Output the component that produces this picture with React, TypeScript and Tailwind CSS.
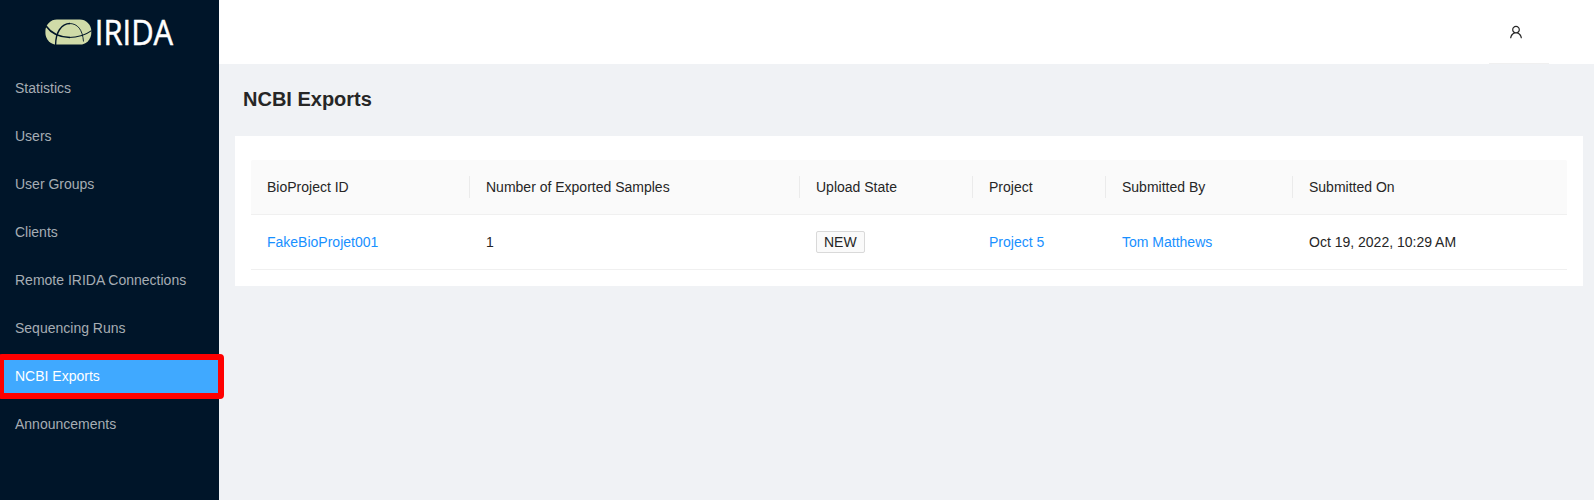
const menu = [
  "Statistics",
  "Users",
  "User Groups",
  "Clients",
  "Remote IRIDA Connections",
  "Sequencing Runs",
  "NCBI Exports",
  "Announcements",
];

const columns = [
  { title: "BioProject ID", width: 219 },
  { title: "Number of Exported Samples", width: 330 },
  { title: "Upload State", width: 173 },
  { title: "Project", width: 133 },
  { title: "Submitted By", width: 187 },
  { title: "Submitted On", width: 274 },
];

function Logo() {
  return (
    <svg width="219" height="64" viewBox="0 0 219 64" className="block">
      <rect x="45.4" y="19.6" width="45.9" height="25" rx="11.5" fill="#d0dba8" />
      <g fill="none" stroke="#001529" strokeLinecap="butt">
        <path d="M46 26C51 33 59 37.3 70 37.5" strokeWidth="1.6" />
        <path d="M69 37.5C79 37.5 86 34.6 91.5 30.6" strokeWidth="1.1" />
        <path d="M55.6 45C55.6 33 61 23.5 70 23.5" strokeWidth="1.4" />
        <path d="M69 23.5C78 23.4 82.5 30 83.5 41.5" strokeWidth="0.9" />
      </g>
      <text
        x="94.8"
        y="44.5"
        fill="#fff"
        stroke="#fff"
        strokeWidth="0.5"
        fontSize="34.6"
        fontWeight="400"
        textLength="78.4"
        lengthAdjust="spacingAndGlyphs"
        className="font-['Open_Sans',sans-serif]"
      >
        IRIDA
      </text>
    </svg>
  );
}

function UserIcon() {
  return (
    <svg viewBox="64 64 896 896" width="14" height="14" fill="currentColor">
      <path d="M858.5 763.6a374 374 0 00-80.6-119.5 375.63 375.63 0 00-119.5-80.6c-.4-.2-.8-.3-1.2-.5C719.5 518 760 444.7 760 362c0-137-111-248-248-248S264 225 264 362c0 82.7 40.5 156 102.8 201.1-.4.2-.8.3-1.2.5-44.8 18.9-85 46-119.5 80.6a375.63 375.63 0 00-80.6 119.5A371.7 371.7 0 00136 901.8a8 8 0 008 8.2h60c4.4 0 7.9-3.5 8-7.8 2-77.2 33-149.5 87.8-204.3 56.7-56.7 132-87.9 212.2-87.9s155.5 31.2 212.2 87.9C779 752.7 810 825 812 902.2c.1 4.4 3.6 7.8 8 7.8h60a8 8 0 008-8.2c-1-47.8-10.9-94.3-29.5-138.2zM512 534c-45.9 0-89.1-17.9-121.6-50.4S340 407.9 340 362c0-45.9 17.9-89.1 50.4-121.6S466.1 190 512 190s89.1 17.9 121.6 50.4S684 316.1 684 362c0 45.9-17.9 89.1-50.4 121.6S557.9 534 512 534z" />
    </svg>
  );
}

export default function App() {
  const cells = [
    <a className="text-[#1890ff]">FakeBioProjet001</a>,
    "1",
    <span className="inline-block rounded-[2px] border border-[#d9d9d9] bg-[#fafafa] px-[7px] leading-5">
      NEW
    </span>,
    <a className="text-[#1890ff]">Project 5</a>,
    <a className="text-[#1890ff]">Tom Matthews</a>,
    "Oct 19, 2022, 10:29 AM",
  ];

  return (
    <div className="flex h-[500px] w-[1594px] overflow-hidden bg-[#f0f2f5] font-['Liberation_Sans',Arial,sans-serif] text-sm text-[#262626]">
      <aside className="w-[219px] shrink-0 bg-[#001529]">
        <Logo />
        <nav className="flex flex-col gap-2 pt-1">
          {menu.map((item) =>
            item === "NCBI Exports" ? (
              <div key={item} className="relative flex h-10 items-center pl-[15px] text-white">
                <div className="absolute -left-0.5 -top-0.5 z-10 h-[45px] w-[226px] rounded-[4px] border-[6px] border-[#ff0000] bg-[#40a9ff]" />
                <span className="relative z-20">{item}</span>
              </div>
            ) : (
              <div key={item} className="flex h-10 items-center pl-[15px] text-[#a6adb4]">
                {item}
              </div>
            ),
          )}
        </nav>
      </aside>
      <div className="flex min-w-0 grow flex-col">
        <header className="flex h-16 justify-end bg-white pr-[45px]">
          <div className="flex w-[60px] items-center justify-center border-b border-[#f0f0f0] pr-[6px] pt-px">
            <UserIcon />
          </div>
        </header>
        <main className="pl-4 pr-[11px]">
          <h1 className="flex h-[72px] items-center pb-0.5 pl-2 text-xl font-bold">NCBI Exports</h1>
          <section className="h-[150px] bg-white px-4 pt-6">
            <table className="w-[1316px] table-fixed border-separate border-spacing-0 text-left">
              <thead>
                <tr className="h-[55px]">
                  {columns.map((c, i) => (
                    <th
                      key={c.title}
                      style={{ width: c.width }}
                      className="border-b border-[#f0f0f0] bg-[#fafafa] p-0 font-normal first:rounded-tl-[2px] last:rounded-tr-[2px]"
                    >
                      <div
                        className={
                          i < columns.length - 1
                            ? "h-[22px] border-r border-[#ebebeb] pl-4 leading-[22px]"
                            : "h-[22px] pl-4 leading-[22px]"
                        }
                      >
                        {c.title}
                      </div>
                    </th>
                  ))}
                </tr>
              </thead>
              <tbody>
                <tr className="h-[55px]">
                  {cells.map((c, i) => (
                    <td key={i} className="border-b border-[#f0f0f0] p-0 pl-4 leading-[22px]">
                      <div className="h-[22px]">{c}</div>
                    </td>
                  ))}
                </tr>
              </tbody>
            </table>
          </section>
        </main>
      </div>
    </div>
  );
}
